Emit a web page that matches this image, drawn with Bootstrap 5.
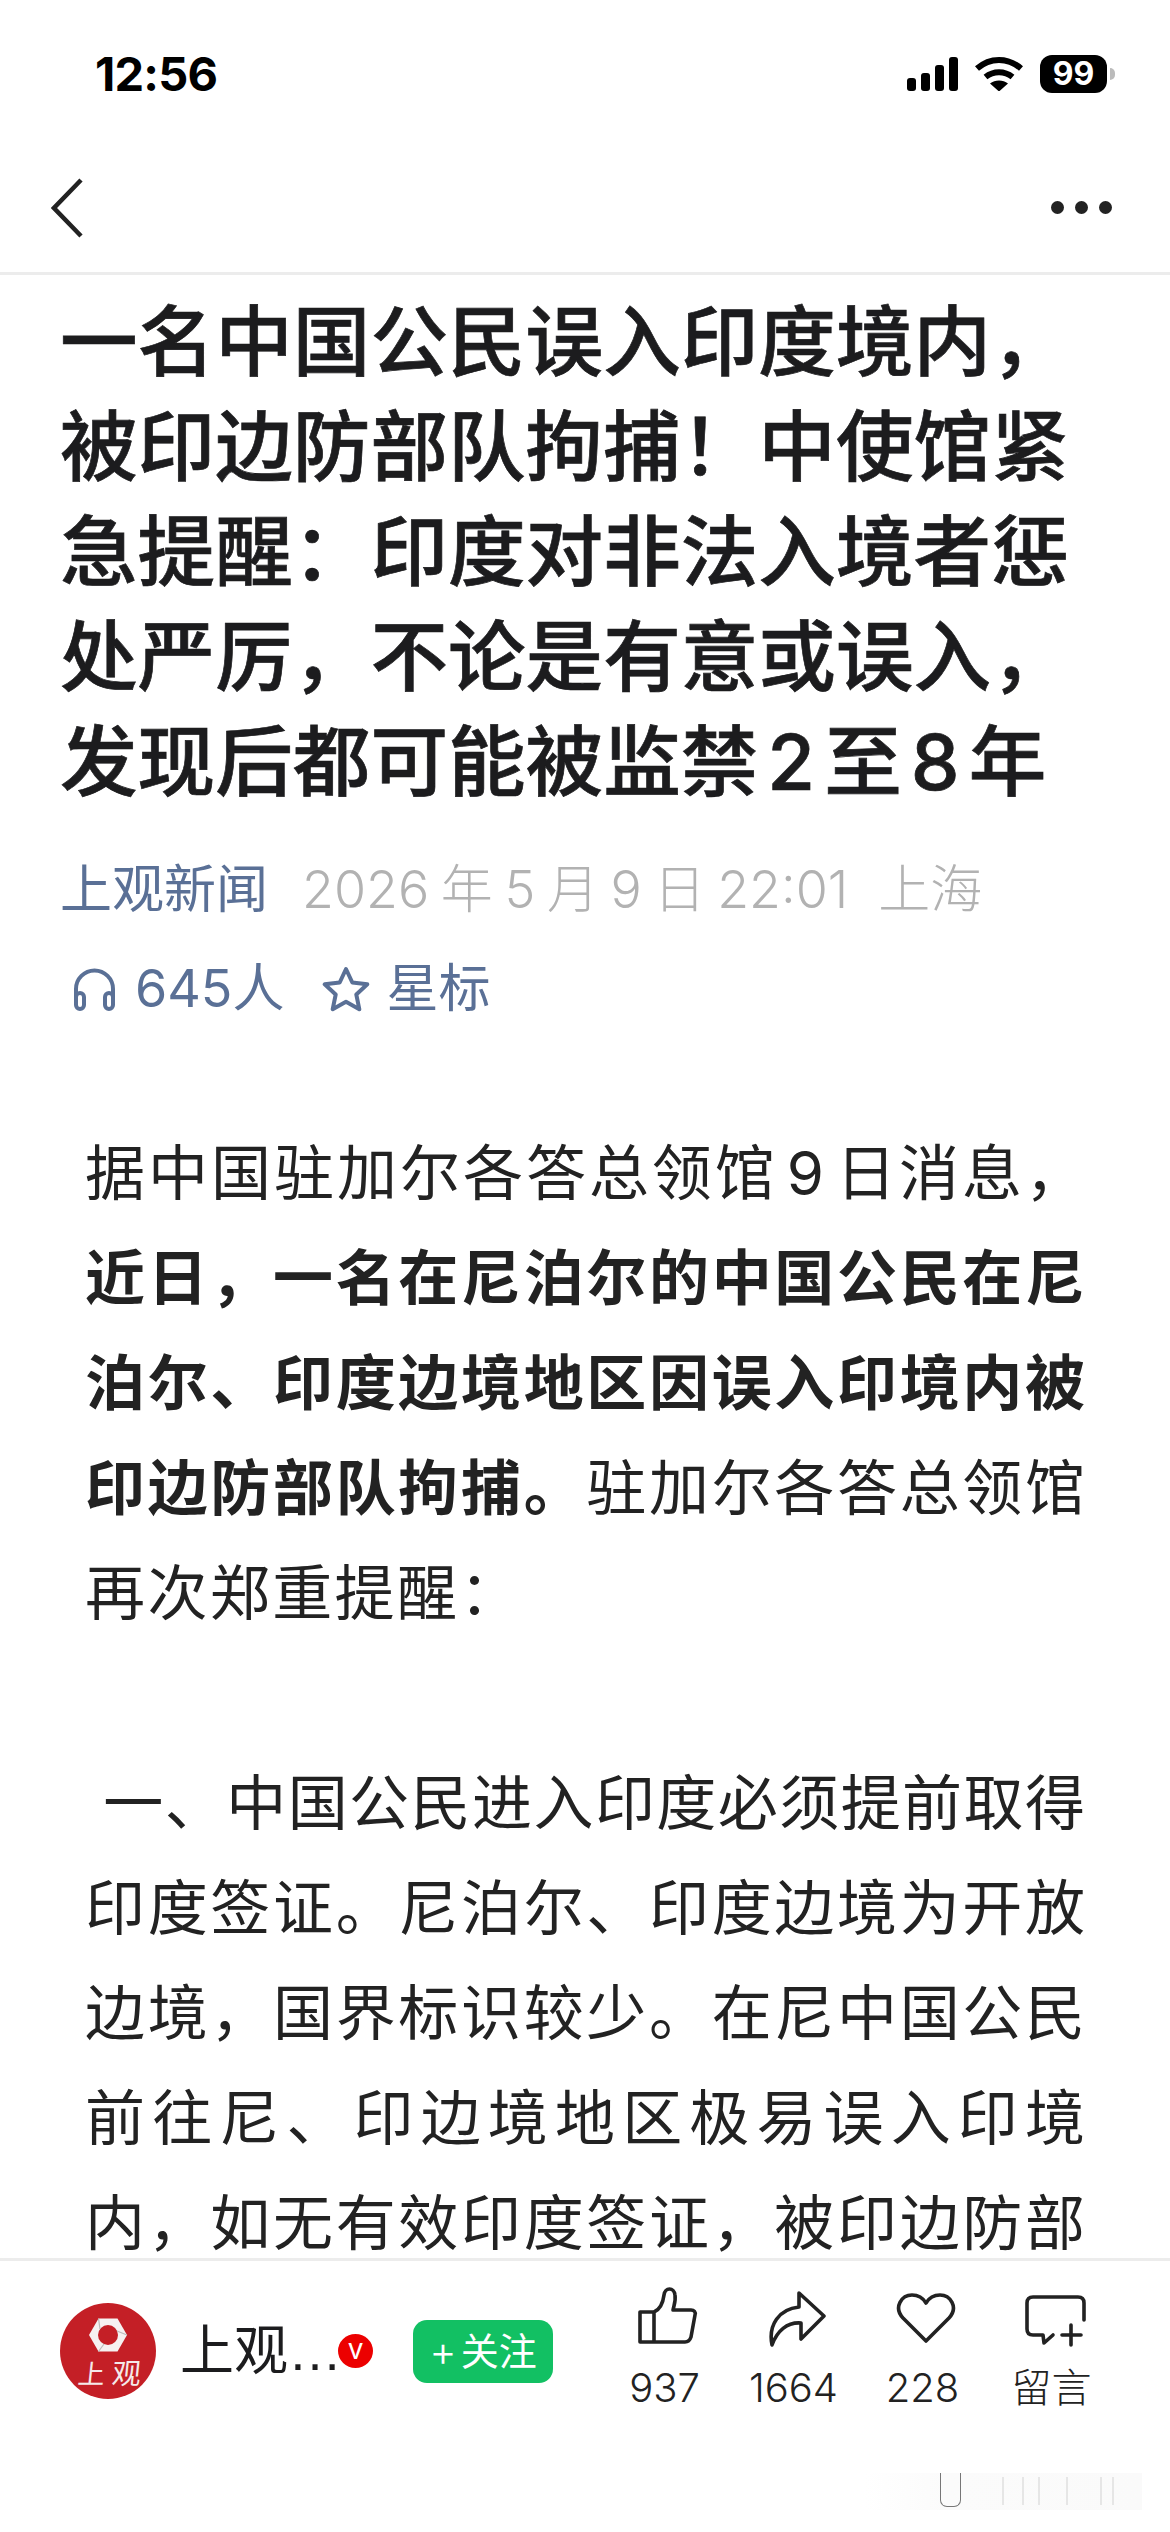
<!doctype html>
<html lang="zh"><head><meta charset="utf-8">
<link href="https://cdn.jsdelivr.net/npm/bootstrap@5.3.0/dist/css/bootstrap.min.css" rel="stylesheet">
<style>
body{background:#fff;font-family:Inter,"Noto Sans CJK SC",sans-serif;color:#1d1d1f;overflow:hidden;margin:0}
.shell{height:2532px;width:1170px;position:relative}
.status{height:143px;padding:44px 55px 0 95px}
.clock{font-size:47px;font-weight:700;color:#000;line-height:60px;letter-spacing:-.8px}
.sysicons{margin-top:11px}
.sig{margin-right:15px}
.wifi{margin-right:16px}
.batt{width:67px;height:38px;border-radius:12px;background:#000;color:#fff;font-size:32px;font-weight:700;line-height:38px;text-align:center}
.nub{width:5px;height:12px;background:#bbb;border-radius:0 5px 5px 0;margin-left:3px}
.topnav{height:132px;border-bottom:3px solid #ececec;padding:0 58px 0 51px}
.dotm{width:13px;height:13px;border-radius:50%;background:#222;display:block}
.dotgap{gap:11px}
.scroller{flex:1 1 auto;overflow:hidden;min-height:0}
.ttl{font-size:77.6px;line-height:105px;font-weight:500;-webkit-text-stroke:.7px #1c1c1e;margin:0;padding:15px 0 0 60px;color:#1c1c1e;font-family:Inter,"Noto Sans CJK SC",sans-serif;white-space:nowrap}
.dg{margin:0 9px}
.meta1{font-size:52px;line-height:70px;padding-left:60px;margin-top:40px;color:#b2b2b2;white-space:nowrap;font-weight:300;word-spacing:-3px}
.src{color:#5a7096;margin-right:34px;font-weight:400}
.loc{margin-left:30px}
.meta2{font-size:52px;line-height:70px;padding-left:72px;margin-top:29px;color:#5a7096;font-weight:300}
.meta2 span{font-weight:400}
.hs-t{margin-left:18px}
.st-i{margin-left:38px}
.st-t{margin-left:16px}
.bodytext{padding:0 85px 0 85px;margin-top:97px;font-size:60px;line-height:105px;color:#222}
.ln{display:block;text-align:justify;text-align-last:justify;white-space:nowrap}
.ln.shortln{text-align-last:left;letter-spacing:2.4px}
.bodytext b{font-weight:700}
.gapline{height:105px}
.bar{height:274px;border-top:3px solid #ececec;padding:42px 0 0 60px;position:relative}
.logo{width:96px;height:96px;flex:none}
.who-name{font-size:54px;line-height:60px;margin-left:24px;color:#1c1c1e;white-space:nowrap;font-family:"Liberation Sans","Noto Sans CJK SC",sans-serif}
.vmark{width:35px;height:34px;border-radius:50%;background:#ec0000;color:#fff;font-size:28px;line-height:30px;text-align:center;margin-left:-4px;flex:none}
.followbtn{background:#12c063;color:#fff;width:140px;height:63px;border-radius:14px;font-size:38px;line-height:62px;margin-left:40px;flex:none}
.plus{font-size:42px;margin-right:4px;font-weight:300}
.stats{position:absolute;top:26px;left:600px}
.stat{width:129px;text-align:center;font-size:40px;line-height:50px;color:#222;font-weight:300}
.stat svg{display:block;margin:0 auto 16px;width:64px;height:60px;position:relative;left:3px}
.stat svg *{fill:none;stroke:#222;stroke-width:3.6;stroke-linejoin:round;stroke-linecap:round}
.ghost{position:absolute;left:865px;top:2473px;width:277px;height:37px;background-image:linear-gradient(90deg,#fff,#fbfbfb 30%,#fafafa)}
.ghost i{position:absolute;left:75px;top:0;width:21px;height:34px;border:1px solid #777;border-top:0;border-radius:0 0 7px 7px;display:block}
.ghost u{position:absolute;top:4px;height:28px;width:2px;background:#e6e6e6;display:block}
.ghost .u1{left:137px}.ghost .u2{left:157px}.ghost .u3{left:173px}.ghost .u4{left:201px}.ghost .u5{left:235px}.ghost .u6{left:247px}
</style></head>
<body>
<div class="shell d-flex flex-column">
  <div class="status d-flex justify-content-between flex-shrink-0">
    <div class="clock">12:56</div>
    <div class="d-flex align-items-start sysicons">
      <svg class="sig" width="52" height="36" viewBox="0 0 52 36"><g fill="#000"><rect x="0" y="23" width="9" height="13" rx="3"/><rect x="14" y="18" width="9" height="18" rx="3"/><rect x="28" y="10" width="9" height="26" rx="3"/><rect x="42" y="2" width="9" height="34" rx="3"/></g></svg>
      <svg class="wifi" width="50" height="36" viewBox="0 0 50 36"><g fill="none" stroke="#000" stroke-width="6"><path d="M3 13.500C16 2 34 2 47 13.500"/><path d="M11.500 22c8-6.500 19-6.500 27 0"/></g><path d="M16 28.500c5-4 13-4 18 0L25 36.500z" fill="#000"/></svg>
      <div class="d-flex align-items-center">
        <div class="batt">99</div><div class="nub"></div>
      </div>
    </div>
  </div>
  <div class="topnav d-flex justify-content-between align-items-center flex-shrink-0">
    <svg width="32" height="60" viewBox="0 0 32 60"><path d="M30 2 3 30l27 28" fill="none" stroke="#222" stroke-width="4.500"/></svg>
    <div class="d-flex dotgap"><span class="dotm"></span><span class="dotm"></span><span class="dotm"></span></div>
  </div>
  <div class="scroller">
    <h1 class="ttl">一名中国公民误入印度境内，<br>被印边防部队拘捕！中使馆紧<br>急提醒：印度对非法入境者惩<br>处严厉，不论是有意或误入，<br>发现后都可能被监禁<span class="dg">2</span>至<span class="dg">8</span>年</h1>
    <div class="meta1"><span class="src">上观新闻</span>2026 年 5 月 9 日 22:01<span class="loc">上海</span></div>
    <div class="meta2 d-flex align-items-center">
      <svg width="45" height="44" viewBox="0 0 45 44"><g fill="none" stroke="#5a7096" stroke-width="4"><path d="M4 32V22a18.500 18.500 0 0 1 37 0v10"/><rect x="4" y="26" width="8" height="16" rx="4"/><rect x="33" y="26" width="8" height="16" rx="4"/></g></svg>
      <span class="hs-t">645人</span>
      <svg class="st-i" width="48" height="46" viewBox="0 0 48 46"><path d="M24 3l6.300 13.500 15 1.800-11 10.200 3 14.700L24 35.800 10.700 43.200l3-14.700-11-10.200 15-1.800z" fill="none" stroke="#5a7096" stroke-width="4" stroke-linejoin="round"/></svg>
      <span class="st-t">星标</span>
    </div>
    <div class="bodytext">
      <span class="ln">据中国驻加尔各答总领馆<span class="dg">9</span>日消息，</span>
      <span class="ln"><b>近日，一名在尼泊尔的中国公民在尼</b></span>
      <span class="ln"><b>泊尔、印度边境地区因误入印境内被</b></span>
      <span class="ln"><b>印边防部队拘捕。</b>驻加尔各答总领馆</span>
      <span class="ln shortln">再次郑重提醒：</span>
      <div class="gapline"></div>
      <span class="ln">&nbsp;一、中国公民进入印度必须提前取得</span>
      <span class="ln">印度签证。尼泊尔、印度边境为开放</span>
      <span class="ln">边境，国界标识较少。在尼中国公民</span>
      <span class="ln">前往尼、印边境地区极易误入印境</span>
      <span class="ln">内，如无有效印度签证，被印边防部</span>
    </div>
  </div>
  <div class="bar flex-shrink-0">
    <div class="d-flex align-items-center">
      <svg class="logo" viewBox="0 0 96 96"><circle cx="48" cy="48" r="48" fill="#c41f26"/><path d="M29 32l9.500-16.500h19L67 32l-9.500 16.500h-19z" fill="#f6f1f1"/><circle cx="48" cy="32" r="10" fill="#c41f26"/><path d="M38.500 15.500 40 26M67 32 57 28M38.500 48.500 44 41" stroke="#bbb" stroke-width="1.200" fill="none"/><text x="31" y="81" text-anchor="middle" font-size="27" fill="#f5e9e9" font-family="Noto Sans CJK SC" transform="skewX(-6) translate(8 0)">上</text><text x="66" y="81" text-anchor="middle" font-size="29" fill="#f5e9e9" font-family="Noto Sans CJK SC" transform="skewX(-6) translate(8 0)">观</text></svg>
      <span class="who-name">上观…</span><span class="vmark">v</span>
      <span class="followbtn d-flex justify-content-center align-items-center"><span class="plus">+</span>关注</span>
    </div>
    <div class="stats d-flex">
      <div class="stat"><svg viewBox="0 0 64 60"><path d="M4 25h14v30H4zM18 25C25 22 27 16 28 8 29 0 38 0 39 8 40 14 38 18 37 23H55C58 23 60 25 59 28L55 50C54 53 52 55 49 55H18"/></svg>937</div>
      <div class="stat"><svg viewBox="0 0 64 60"><path d="M34 6 59 29 36 52V36C22 35 12 44 7 58 3 38 14 22 34 20Z"/></svg>1664</div>
      <div class="stat"><svg viewBox="0 0 64 60"><path d="M32 54 9 31C-1 20 8 8 18 8 24 8 29 11 32 16 35 11 40 8 46 8 56 8 65 20 55 31Z"/></svg>228</div>
      <div class="stat"><svg viewBox="0 0 64 60"><path d="M61 33V16c0-4-2-6-6-6H10c-4 0-6 2-6 6v26c0 4 2 6 6 6h10l1 8 9-8M48 38v20M39 48h19"/></svg>留言</div>
    </div>
  </div>
  <div class="ghost"><i></i><u class="u1"></u><u class="u2"></u><u class="u3"></u><u class="u4"></u><u class="u5"></u><u class="u6"></u></div>
</div>
</body></html>
